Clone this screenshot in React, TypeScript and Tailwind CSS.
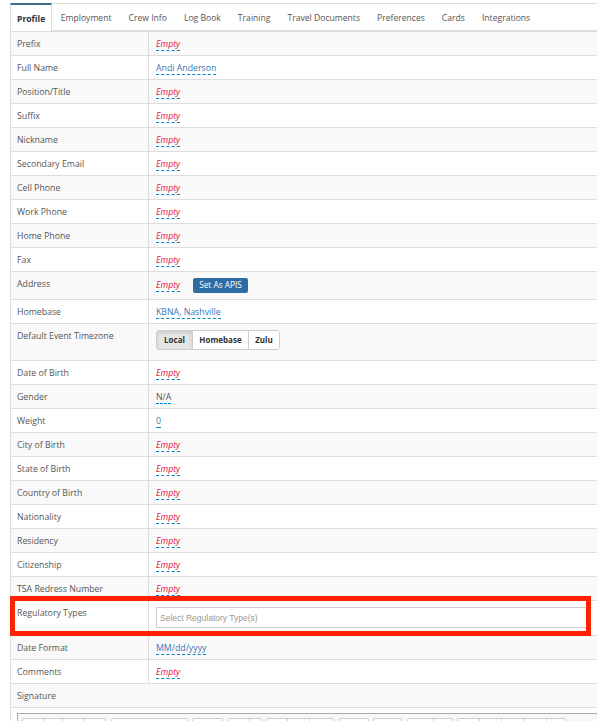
import React from "react";

const Empty = () => (
  <span className="inline-block italic text-[#dd1144] leading-[12px] border-b border-dashed border-[#0088cc]">
    Empty
  </span>
);

const Link = ({ children }: { children: React.ReactNode }) => (
  <span className="inline-block text-[#3a74b4] leading-[12px] border-b border-dashed border-[#0088cc]">
    {children}
  </span>
);

function Row({
  label,
  children,
  shaded,
  h = "h-[24px]",
}: {
  label: string;
  children?: React.ReactNode;
  shaded: boolean;
  h?: string;
}) {
  return (
    <div className={`flex border-b border-[#dddddd] ${h} ${shaded ? "bg-[#f9f9f9]" : "bg-white"}`}>
      <div className="w-[138px] shrink-0 border-r border-[#dddddd] pl-[6px] pt-[6px] leading-[12px] text-[#555555]">
        {label}
      </div>
      <div className="flex-1 pl-[7px] pt-[6px] leading-[12px]">{children}</div>
    </div>
  );
}

const tabs = [
  "Employment",
  "Crew Info",
  "Log Book",
  "Training",
  "Travel Documents",
  "Preferences",
  "Cards",
  "Integrations",
];

const toolbarGroups: number[][] = [
  [21, 20, 23, 22],
  [76],
  [30],
  [21, 13],
  [21, 23, 25],
  [29],
  [28],
  [26, 20],
  [22, 23, 23, 24, 20],
];

export default function App() {
  const simple = [
    "Position/Title",
    "Suffix",
    "Nickname",
    "Secondary Email",
    "Cell Phone",
    "Work Phone",
    "Home Phone",
    "Fax",
  ];
  const lower = [
    "City of Birth",
    "State of Birth",
    "Country of Birth",
    "Nationality",
    "Residency",
    "Citizenship",
    "TSA Redress Number",
  ];
  return (
    <div className="relative w-[597px] h-[721px] overflow-hidden bg-white font-['Open_Sans',sans-serif] text-[8.75px]">
      <div className="pl-[10px] pt-[3px]">
        {/* Tabs */}
        <div className="flex h-[27px] border-t border-[#dddddd] text-[8.6px]">
          <div className="-mt-px flex items-center h-[28px] pt-[2px] px-[6px] bg-white border-t-2 border-t-[#3d6f85] border-x border-x-[#dddddd] font-bold text-[#333333]">
            Profile
          </div>
          {tabs.map((t) => (
            <div key={t} className="flex items-center pt-[2px] px-[8.5px] text-[#555555]">
              {t}
            </div>
          ))}
        </div>
        {/* Table */}
        <div className="border-t-2 border-[#dddddd] border-l border-l-[#dddddd]">
          <Row label="Prefix" shaded>
            <Empty />
          </Row>
          <Row label="Full Name" shaded={false}>
            <Link>Andi Anderson</Link>
          </Row>
          {simple.map((l, i) => (
            <Row key={l} label={l} shaded={i % 2 === 0}>
              <Empty />
            </Row>
          ))}
          <Row label="Address" shaded h="h-[28px]">
            <div className="flex items-center h-[15px] gap-[13px]">
              <Empty />
              <span className="inline-flex items-center h-[15px] px-[6px] rounded-[2px] bg-[#2e6da4] text-white text-[8.3px] leading-none">
                Set As APIS
              </span>
            </div>
          </Row>
          <Row label="Homebase" shaded={false}>
            <Link>KBNA, Nashville</Link>
          </Row>
          <Row label="Default Event Timezone" shaded h="h-[37px]">
            <div className="flex h-[20px] w-[124px] rounded-[3px] border border-[#cccccc] text-[8px] font-bold text-[#333333] overflow-hidden">
              <div className="w-[36px] flex items-center justify-center bg-[#e6e6e6] shadow-[inset_0_2px_4px_rgba(0,0,0,0.12)] border-r border-[#cccccc]">
                Local
              </div>
              <div className="w-[56px] flex items-center justify-center bg-white border-r border-[#cccccc]">
                Homebase
              </div>
              <div className="flex-1 flex items-center justify-center bg-white">Zulu</div>
            </div>
          </Row>
          <Row label="Date of Birth" shaded={false}>
            <Empty />
          </Row>
          <Row label="Gender" shaded>
            <span className="inline-block text-[#555555] leading-[12px] border-b border-dashed border-[#0088cc]">
              N/A
            </span>
          </Row>
          <Row label="Weight" shaded={false}>
            <Link>0</Link>
          </Row>
          {lower.map((l, i) => (
            <Row key={l} label={l} shaded={i % 2 === 0}>
              <Empty />
            </Row>
          ))}
          <Row label="Regulatory Types" shaded={false} h="h-[35px]">
            <div className="flex items-center h-[21px] w-[434px] border border-[#cccccc] bg-white pl-[3px] font-['Liberation_Sans',Arial,sans-serif] text-[8.5px] text-[#999999]">
              Select Regulatory Type(s)
            </div>
          </Row>
          <Row label="Date Format" shaded>
            <Link>MM/dd/yyyy</Link>
          </Row>
          <Row label="Comments" shaded={false}>
            <Empty />
          </Row>
          <div className="h-[24px] border-b border-[#dddddd] bg-[#f9f9f9] pl-[6px] pt-[6px] leading-[12px] text-[#555555]">
            Signature
          </div>
          {/* Editor */}
          <div className="pl-[6px] pt-[5px] h-[20px]">
            <div className="h-full border-t border-l border-[#aaaaaa] bg-[#f7f7f7] pl-[4px] pt-[4px] flex gap-[4.5px]">
              {toolbarGroups.map((g, gi) => (
                <div key={gi} className="flex h-[20px] border border-[#cccccc] rounded-t-[2px] bg-white">
                  {g.map((w, bi) => (
                    <div
                      key={bi}
                      className={bi > 0 ? "border-l border-[#cccccc]" : ""}
                      style={{ width: w - 1 }}
                    />
                  ))}
                </div>
              ))}
            </div>
          </div>
        </div>
      </div>
      {/* Annotation box */}
      <div className="absolute left-[10px] top-[596px] w-[581px] h-[40px] border-[5px] border-[#ff2200]" />
    </div>
  );
}
